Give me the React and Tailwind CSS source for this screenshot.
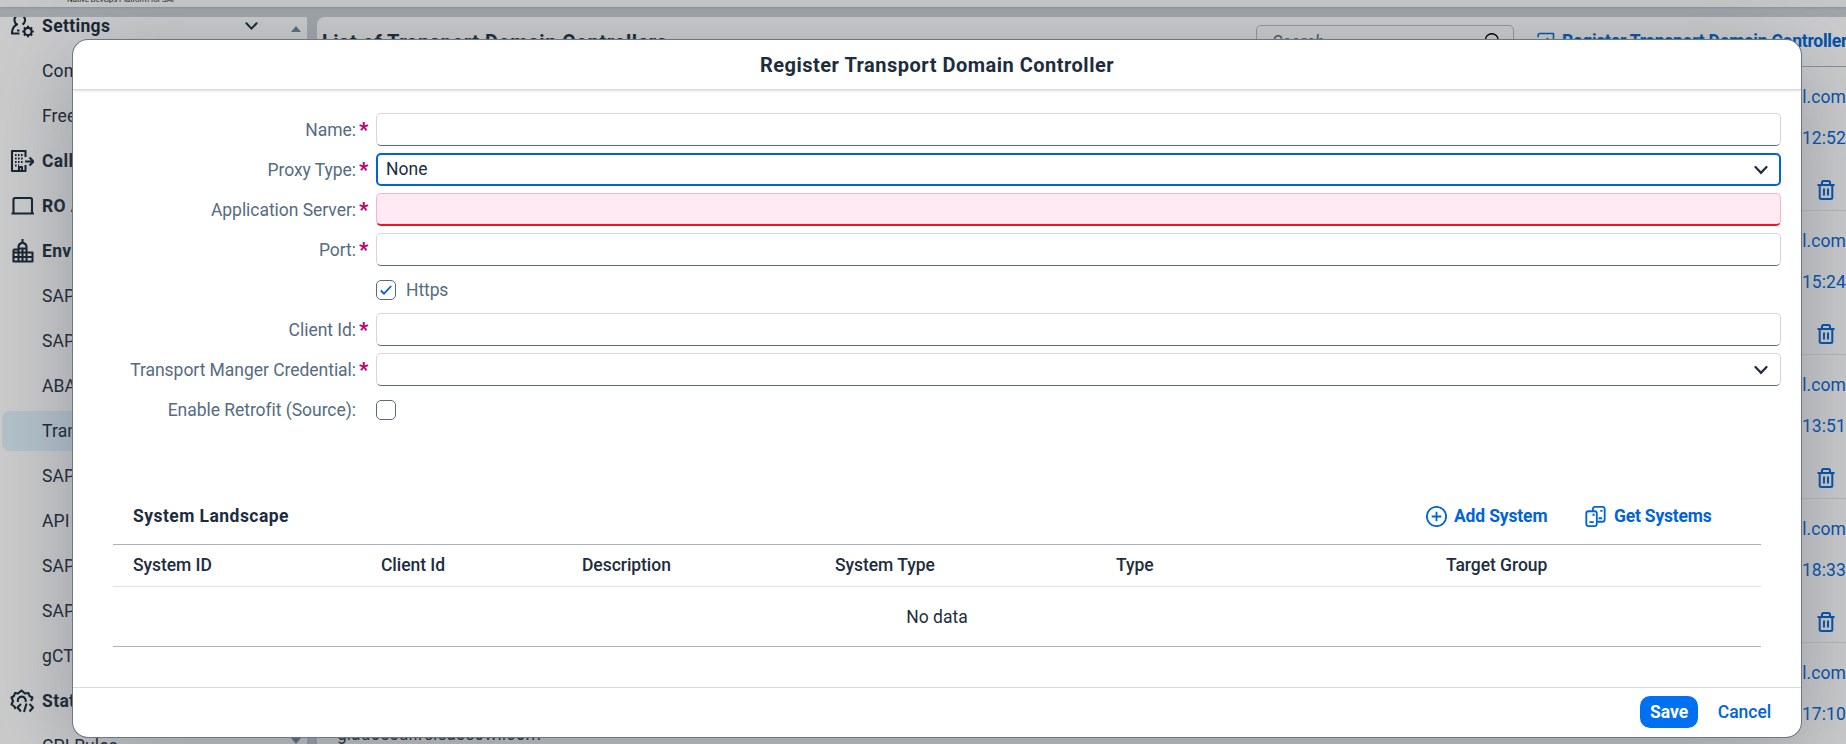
const side = [
  ["Settings", 1], ["Communication", 0], ["Freeze", 0], ["Callout", 1], ["RO Agents", 1], ["Environments", 1],
  ["SAP ABAP", 0], ["SAP BTP", 0], ["ABAP Systems", 0], ["Transport Domain", 0], ["SAP Cloud", 0], ["API Portal", 0],
  ["SAP CPI", 0], ["SAP Build", 0], ["gCTS", 0], ["Static Analysis", 1], ["CPI Rules", 0],
];

const icons = {
  Settings: (
    <>
      <path d="M12.500 10.500A5.300 5.300 0 1 0 7 10.500C3.500 12 2 15 2 19.500H9.500M7 16.500H9.500" />
      <circle cx="18" cy="17.500" r="3.600" />
      <path d="M18 11.700v2.500M18 20.800v2.500M12.200 17.500h2.500M21.300 17.500h2.500M13.900 13.400l1.800 1.800M20.300 19.800l1.800 1.800M22.100 13.400l-1.800 1.800M15.700 19.800l-1.800 1.800" />
    </>
  ),
  Callout: (
    <>
      <path d="M15.500 8V2H2v20h13.500v-6M15 12.500h8M19.500 8.500l4 4-4 4M9 22v-4h3v4" />
      <path d="M5 6h8M5 9.500h8M5 13h8M5 16.500h4" strokeDasharray="1.600 1.400" />
    </>
  ),
  "RO Agents": <path d="M3.500 19V5.500Q3.500 4 5 4H20.500Q22 4 22 5.500V19M1.500 19.500H24" />,
  Environments: (
    <path d="M3.500 10.500H8.500V7.500Q8.500 5 12.500 3.500Q16.500 5 16.500 7.500V22M12.500 0V3.500M3.500 10.500V22.500H22.500V13.500H3.500M8.500 10.500V22M12.500 10.500V22M3.500 18H22.500M8.500 9.500H16.500" />
  ),
  "Static Analysis": (
    <>
      <path d="M5.500 20 4.500 17.500 1.500 15.500 3 12 1.500 8.500 4 7 5 4 8 4.500 11.500 1.500 15 4.500 18.500 4 19.500 7 22.500 8.500 21 12M8 13a4 4 0 1 1 7.500 0" />
      <path d="M11 15l-3.500 3.500 3.500 4M16.500 14.500l-2.500 8.500M19.500 15l3.500 3.500-3.500 4" />
    </>
  ),
};

function Svg({ children, className }) {
  return (
    <svg viewBox="0 0 24 24" fill="none" stroke="currentColor" strokeWidth="2.100" strokeLinejoin="round" className={className}>
      {children}
    </svg>
  );
}

function Chevron({ className }) {
  return (
    <svg viewBox="0 0 14 10" fill="none" stroke="currentColor" strokeWidth="2.200" strokeLinecap="round" className={className}>
      <path d="M1.500 2 7 7.800 12.500 2" />
    </svg>
  );
}

function Trash() {
  return (
    <svg viewBox="0 0 18 20" fill="none" stroke="currentColor" strokeWidth="2" className="h-5 w-[18px]">
      <path d="M0.500 5H17.500M2.700 5V17.500Q2.700 19 4.200 19H13.800Q15.300 19 15.300 17.500V5M5 5V2.500Q5 1 6.500 1H11.500Q13 1 13 2.500V5M7 8.500V15.500M11 8.500V15.500" />
    </svg>
  );
}

function Row({ label, required, children }) {
  return (
    <div className="flex h-10 items-center">
      <div className="flex w-[291px] shrink-0 items-center">
        <div className="w-[271px] whitespace-nowrap text-right tracking-[-0.04px] text-[#556b82]">{label}</div>
        {required && <div className="ml-[3px] w-2 text-[20px] font-black leading-4 text-[#ba066c]">*</div>}
      </div>
      {children}
    </div>
  );
}

const field = "mb-px flex h-[33px] w-[1405px] items-center rounded-[5px] border border-[#d3d7dd] border-b-[#556b82]";

export default function App() {
  return (
    <div className="relative h-[744px] w-[1846px] overflow-hidden bg-[#c9d0d6] font-['Roboto',sans-serif] text-[17.5px] leading-6 text-[#1d2d3e]">
      <div className="flex h-full flex-col">
        <header className="h-[7px] shrink-0 overflow-hidden bg-[#fafafa] pl-[67px] shadow-sm">
          <div className="-mt-[6px] text-[8px] leading-[11px] tracking-[-0.15px] text-[#333]">Native DevOps Platform for SAP</div>
        </header>
        <div className="mt-[10px] flex min-h-0 flex-1 gap-[10px]">
          <aside className="relative w-[307px] shrink-0 overflow-hidden bg-white">
            <div className="-mt-[14px] flex flex-col">
              {side.map(([t, bold]) => (
                <div key={t} className={t === "Transport Domain" ? "my-[2.5px] ml-0.5 flex h-10 items-center rounded-lg bg-[#e2f3fe] pl-2" : "flex h-[45px] items-center pl-[10px]"}>
                  <div className="w-8">{bold ? <Svg className="size-6 text-[#1d2d3e]">{icons[t]}</Svg> : null}</div>
                  <div className={bold ? "whitespace-nowrap font-bold tracking-[0.35px]" : "whitespace-nowrap tracking-[0.15px]"}>{t}</div>
                  {t === "Settings" && <Chevron className="ml-[135px] h-[10px] w-[13px]" />}
                </div>
              ))}
            </div>
            <svg viewBox="0 0 10 6" className="absolute left-[291px] top-[9px] h-[6px] w-[10px] fill-[#6d87a0]"><path d="M0 6 5 0 10 6z" /></svg>
            <svg viewBox="0 0 10 6" className="absolute bottom-0 left-[291px] h-[6px] w-[10px] fill-[#6d87a0]"><path d="M0 0 5 6 10 0z" /></svg>
          </aside>
          <main className="flex min-w-0 flex-1 flex-col overflow-hidden rounded-tl-lg bg-white">
            <div className="flex h-[50px] shrink-0 items-center border-b border-[#a8b3bf] pl-[5px]">
              <div className="w-[934px] shrink-0 whitespace-nowrap text-[20px] font-bold tracking-[0.5px]">List of Transport Domain Controllers</div>
              <div className="flex h-[33px] w-[258px] shrink-0 items-center justify-between rounded-[5px] border border-[#b5bcc5] pl-[15px] pr-3 italic text-[#556b82]">
                Search
                <Svg className="size-[17px] text-black"><circle cx="11" cy="10" r="9" /><path d="m16 16 7 7" /></Svg>
              </div>
              <Svg className="mb-0.5 ml-[23px] size-[18px] shrink-0 text-[#0064d9]"><path d="M1.500 7V4.500Q1.500 2 4 2H22V22H2V17M8 12H17M13 8l4 4-4 4" /></Svg>
              <div className="mb-0.5 ml-[7px] w-[284px] shrink-0 whitespace-nowrap font-bold tracking-[-0.25px] text-[#0064d9]">Register Transport Domain Controller</div>
            </div>
            {["12:52", "15:24", "13:51", "18:33", "17:10"].map((t, i) => (
              <div key={t} className="flex h-36 shrink-0 justify-between border-b border-[#e5e5e5] pl-5">
                <div className="pt-[79px]">{i === 4 && <div>gladossdr.releaseowl.com</div>}</div>
                <div className="flex flex-col items-end pt-[18px] text-[#0064d9]">
                  <div className="tracking-[0.1px]">releaseowl.com</div>
                  <div className="mt-[17px] tracking-[0.1px]">at {t}</div>
                  <div className="mr-[11px] mt-[30px]"><Trash /></div>
                </div>
              </div>
            ))}
          </main>
        </div>
      </div>
      <div className="absolute inset-0 bg-black/20" />

      <div className="absolute left-[73px] top-10 flex h-[697px] w-[1728px] flex-col overflow-hidden rounded-[15px] bg-white shadow-[0_0_0_1px_#6c7784,0_20px_90px_rgba(80,92,108,0.45)]">
        <div className="flex h-[50px] shrink-0 items-center justify-center border-b border-[#d9d9d9] text-[20px] font-bold tracking-[0.5px] shadow-sm">
          Register Transport Domain Controller
        </div>
        <div className="flex flex-1 flex-col pl-3 pt-5">
          <Row label="Name:" required><div className={field} /></Row>
          <Row label="Proxy Type:" required>
            <div className="mb-px flex h-[33px] w-[1405px] items-center justify-between rounded-[5px] border-2 border-[#0064d9] pl-2 pr-[11px]">
              <span className="-mt-0.5">None</span> <Chevron className="h-[10px] w-[14px]" />
            </div>
          </Row>
          <Row label="Application Server:" required>
            <div className="mb-px h-[33px] w-[1405px] rounded-[5px] border border-b-2 border-[#ffb2d0] border-b-[#f5121e] bg-[#ffeaf4]" />
          </Row>
          <Row label="Port:" required><div className={field} /></Row>
          <Row label="">
            <div className="flex size-5 items-center justify-center rounded-[5px] border border-[#556b82]">
              <svg viewBox="0 0 12 10" className="h-[10px] w-3" fill="none" stroke="#0064d9" strokeWidth="1.800"><path d="M0.800 5.500 4 8.700 11.200 1" /></svg>
            </div>
            <div className="ml-[10px] tracking-[-0.1px] text-[#556b82]">Https</div>
          </Row>
          <Row label="Client Id:" required><div className={field} /></Row>
          <Row label="Transport Manger Credential:" required>
            <div className={field + " justify-end pr-3"}><Chevron className="h-[10px] w-[14px]" /></div>
          </Row>
          <Row label="Enable Retrofit (Source):"><div className="size-5 rounded-[5px] border border-[#556b82]" /></Row>

          <div className="ml-7 mt-[58px] flex h-[56px] w-[1648px] items-center pl-5 pr-[50px]">
            <div className="flex-1 font-bold tracking-[0.45px]">System Landscape</div>
            <div className="flex items-center font-bold text-[#0064d9]">
              <Svg className="mr-[7px] size-[21px]"><circle cx="12" cy="12" r="11" /><path d="M12 6.500v11M6.500 12h11" /></Svg>
              <div className="w-[92px] whitespace-nowrap tracking-[-0.15px]">Add System</div>
              <Svg className="ml-[39px] mr-2 size-[21px]">
                <rect x="1.500" y="6" width="12" height="17" rx="2.500" />
                <path d="M9 6V3.500Q9 1 11.500 1H20Q22.500 1 22.500 3.500V15.500Q22.500 18 20 18H14M5 18.500h5M15.500 14h4" />
                <path d="M8.500 10h2.500M17.500 5.500h2.500" />
              </Svg>
              <div className="w-[97px] whitespace-nowrap tracking-[-0.2px]">Get Systems</div>
            </div>
          </div>
          <div className="ml-7 w-[1648px] border-y border-[#a8b2c1]">
            <div className="grid h-[42px] grid-cols-[248px_201px_253px_281px_330px_1fr] items-center border-b border-[#e0e0e0] pb-0.5 pl-5 font-medium tracking-[-0.05px]">
              <div>System ID</div><div>Client Id</div><div>Description</div><div>System Type</div><div>Type</div><div>Target Group</div>
            </div>
            <div className="flex h-[59px] items-center justify-center">No data</div>
          </div>
        </div>
        <div className="flex h-[50px] shrink-0 items-center justify-end border-t border-[#d9d9d9] pb-px pr-[10px] font-bold">
          <button className="h-8 w-[58px] rounded-[10px] bg-[#0070f2] pb-px text-white">Save</button>
          <button className="w-[93px] pb-px font-medium text-[#0064d9]">Cancel</button>
        </div>
      </div>
    </div>
  );
}
